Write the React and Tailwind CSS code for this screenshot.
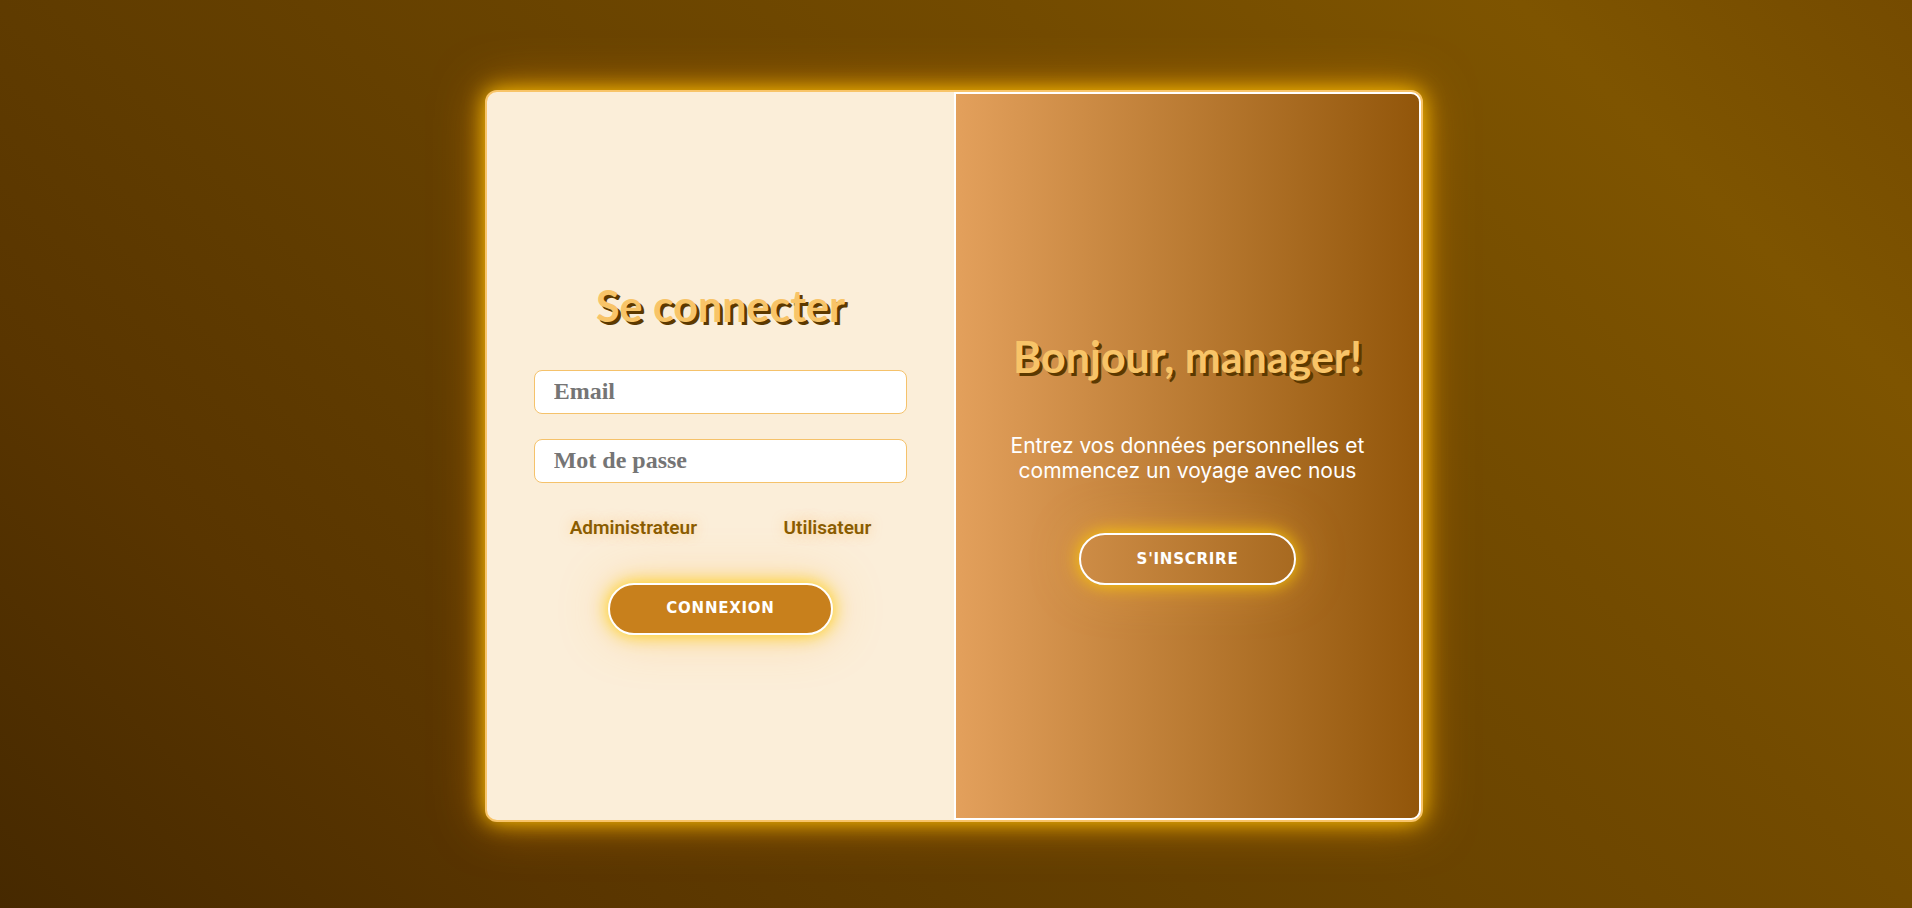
import { useState } from "react";

const headingClass =
  "text-center font-['Comic_Sans_MS','Lato',sans-serif] text-[43px] leading-[56px] font-bold text-[#f8c468] [text-shadow:3px_3px_0_#5c3900]";

const fieldClass =
  "h-11 w-full rounded-lg border border-[#f5c26b] bg-white px-[19px] font-['Liberation_Serif',serif] text-2xl font-bold text-[#5c3900] outline-none placeholder:text-[#757575]";

const buttonClass =
  "h-[52px] cursor-pointer rounded-full border-2 border-white px-14 font-['DejaVu_Sans',sans-serif] text-[15px] font-bold tracking-wider text-white uppercase shadow-[0_0_18px_rgba(255,205,0,0.95),0_0_50px_rgba(255,175,60,0.35)]";

function Field({ type, label, value, onChange }) {
  return (
    <input
      type={type}
      aria-label={label}
      placeholder={label}
      value={value}
      onChange={(e) => onChange(e.target.value)}
      className={fieldClass}
    />
  );
}

function RoleOption({ value, label, role, onSelect }) {
  return (
    <label className="cursor-pointer font-['Roboto',sans-serif] text-[19px] leading-[26px] font-semibold text-[#8a5c00] [text-shadow:0_0_12px_rgba(255,190,90,0.5)]">
      <input
        type="radio"
        name="role"
        value={value}
        checked={role === value}
        onChange={() => onSelect(value)}
        className="sr-only"
      />
      {label}
    </label>
  );
}

export default function App() {
  const [email, setEmail] = useState("");
  const [password, setPassword] = useState("");
  const [role, setRole] = useState("");

  return (
    <div className="flex min-h-screen flex-col bg-[linear-gradient(45deg,#462900_0%,#593500_20%,#603c00_34%,#734b00_68%,#7e5400_86%,#754b00_100%)] pt-[90px] pr-5 pb-[86px] pl-4">
      <main className="mx-auto grid w-full max-w-[938px] flex-1 grid-cols-1 overflow-hidden rounded-xl border-2 border-[#f8c468] bg-[#fbeed9] shadow-[0_0_22px_#ffc400,0_0_50px_rgba(255,150,0,0.5)] md:grid-cols-2">
        <form
          onSubmit={(e) => e.preventDefault()}
          className="flex flex-col items-center justify-center px-[10%]"
        >
          <h1 className={headingClass}>Se connecter</h1>
          <div className="mt-9 flex w-full flex-col gap-[25px]">
            <Field type="email" label="Email" value={email} onChange={setEmail} />
            <Field type="password" label="Mot de passe" value={password} onChange={setPassword} />
          </div>
          <div className="mt-8 flex w-full justify-between px-9">
            <RoleOption value="admin" label="Administrateur" role={role} onSelect={setRole} />
            <RoleOption value="user" label="Utilisateur" role={role} onSelect={setRole} />
          </div>
          <button type="submit" className={`mt-[42px] bg-[#c8801c] ${buttonClass}`}>
            Connexion
          </button>
        </form>
        <section className="flex flex-col items-center justify-center rounded-r-[10px] border-2 border-white bg-[linear-gradient(90deg,#e3a05c,#92560a)] px-10 pt-0.5">
          <h2 className={headingClass}>Bonjour, manager!</h2>
          <p className="mt-12 text-center font-['Inter',sans-serif] text-[21px] leading-[25px] text-white">
            Entrez vos données personnelles et commencez un voyage avec nous
          </p>
          <button type="button" className={`mt-[50px] ${buttonClass}`}>
            S'inscrire
          </button>
        </section>
      </main>
    </div>
  );
}
